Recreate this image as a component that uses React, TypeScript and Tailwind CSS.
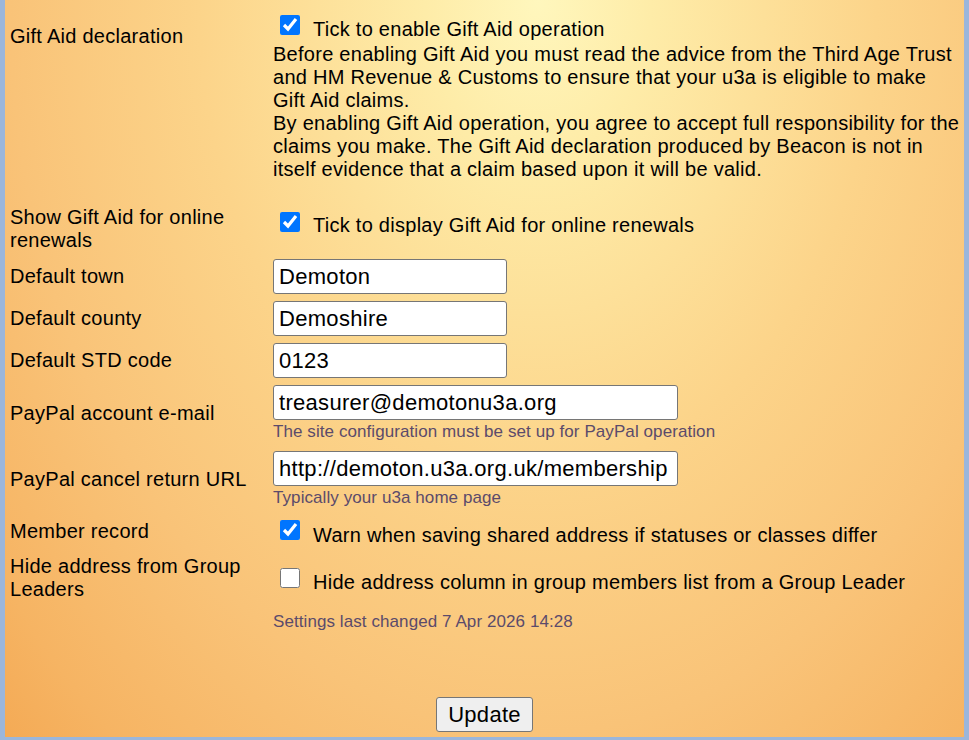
import React from "react";

// Beacon-style settings form: two columns, label on the left, control on the right
const HELP = "text-[17px] leading-[20px] tracking-[0.08px] text-[#5b4b6b]";

function Check({ checked }: { checked: boolean }) {
  return (
    <input
      type="checkbox"
      defaultChecked={checked}
      className="ml-[7px] h-5 w-5 shrink-0"
    />
  );
}

function TextField({ value, wide }: { value: string; wide?: boolean }) {
  return (
    <input
      type="text"
      defaultValue={value}
      className={
        (wide ? "w-[405px]" : "w-[234px]") +
        " h-[35px] rounded-[3px] border border-[#767676] bg-white px-[5px] text-[22px] tracking-[0.3px] text-black outline-none"
      }
    />
  );
}

export default function App() {
  return (
    <div className="h-screen overflow-hidden border-x-[5px] border-b-[3px] border-[#9bb6db] bg-[radial-gradient(ellipse_754px_1046px_at_533px_0px,#fff7bd_0%,#feeca8_15%,#fcd48a_45%,#f9c378_70%,#f6b463_90%,#f4aa55_100%)] font-['Liberation_Sans',Arial,sans-serif] text-[20px] leading-[23px] tracking-[0.27px] text-black">
      <div className="pl-[5px] pt-[15px]">
        {/* Gift Aid declaration */}
        <div className="grid grid-cols-[263px_1fr]">
          <div className="pt-[10px]">Gift Aid declaration</div>
          <div>
            <label className="flex items-start">
              <Check checked />
              <span className="ml-[13px] mt-[3px]">Tick to enable Gift Aid operation</span>
            </label>
            <p className="mt-[1.5px] whitespace-nowrap">
              Before enabling Gift Aid you must read the advice from the Third Age Trust
              <br />
              and HM Revenue &amp; Customs to ensure that your u3a is eligible to make
              <br />
              Gift Aid claims.
              <br />
              By enabling Gift Aid operation, you agree to accept full responsibility for the
              <br />
              claims you make. The Gift Aid declaration produced by Beacon is not in
              <br />
              itself evidence that a claim based upon it will be valid.
            </p>
          </div>
        </div>

        {/* Online renewals */}
        <div className="mt-[25.5px] grid grid-cols-[263px_1fr]">
          <div>
            Show Gift Aid for online
            <br />
            renewals
          </div>
          <label className="flex items-start pt-[6px]">
            <Check checked />
            <span className="ml-[13px] mt-[1.5px]">Tick to display Gift Aid for online renewals</span>
          </label>
        </div>

        {/* Address defaults */}
        <div className="mt-[7px] grid grid-cols-[263px_1fr] items-center">
          <div>Default town</div>
          <TextField value="Demoton" />
        </div>
        <div className="mt-[7px] grid grid-cols-[263px_1fr] items-center">
          <div>Default county</div>
          <TextField value="Demoshire" />
        </div>
        <div className="mt-[7px] grid grid-cols-[263px_1fr] items-center">
          <div>Default STD code</div>
          <TextField value="0123" />
        </div>

        {/* PayPal */}
        <div className="mt-[7px] grid grid-cols-[263px_1fr] items-center">
          <div>PayPal account e-mail</div>
          <div className="flex flex-col">
            <TextField value="treasurer@demotonu3a.org" wide />
            <div className={"mt-[2px] " + HELP}>The site configuration must be set up for PayPal operation</div>
          </div>
        </div>
        <div className="mt-[9px] grid grid-cols-[263px_1fr] items-center">
          <div>PayPal cancel return URL</div>
          <div className="flex flex-col">
            <TextField value="http://demoton.u3a.org.uk/membership" wide />
            <div className={"mt-[2px] " + HELP}>Typically your u3a home page</div>
          </div>
        </div>

        {/* Member record */}
        <div className="mt-[12px] grid grid-cols-[263px_1fr]">
          <div>Member record</div>
          <label className="flex items-start">
            <Check checked />
            <span className="ml-[13px] mt-[4px]">Warn when saving shared address if statuses or classes differ</span>
          </label>
        </div>
        <div className="mt-[8px] grid grid-cols-[263px_1fr]">
          <div>
            Hide address from Group
            <br />
            Leaders
          </div>
          <label className="flex items-start pt-[13px]">
            <Check checked={false} />
            <span className="ml-[13px] mt-[3px]">Hide address column in group members list from a Group Leader</span>
          </label>
        </div>

        <div className="grid grid-cols-[263px_1fr]">
          <div />
          <div className={"mt-[11px] " + HELP}>Settings last changed 7 Apr 2026 14:28</div>
        </div>
      </div>

      <div className="mt-[65px] flex justify-center">
        <button
          type="button"
          className="h-[35px] w-[97px] rounded-[3px] border border-[#767676] bg-[#efefef] text-[22px] tracking-[0.3px] text-black"
        >
          Update
        </button>
      </div>
    </div>
  );
}
